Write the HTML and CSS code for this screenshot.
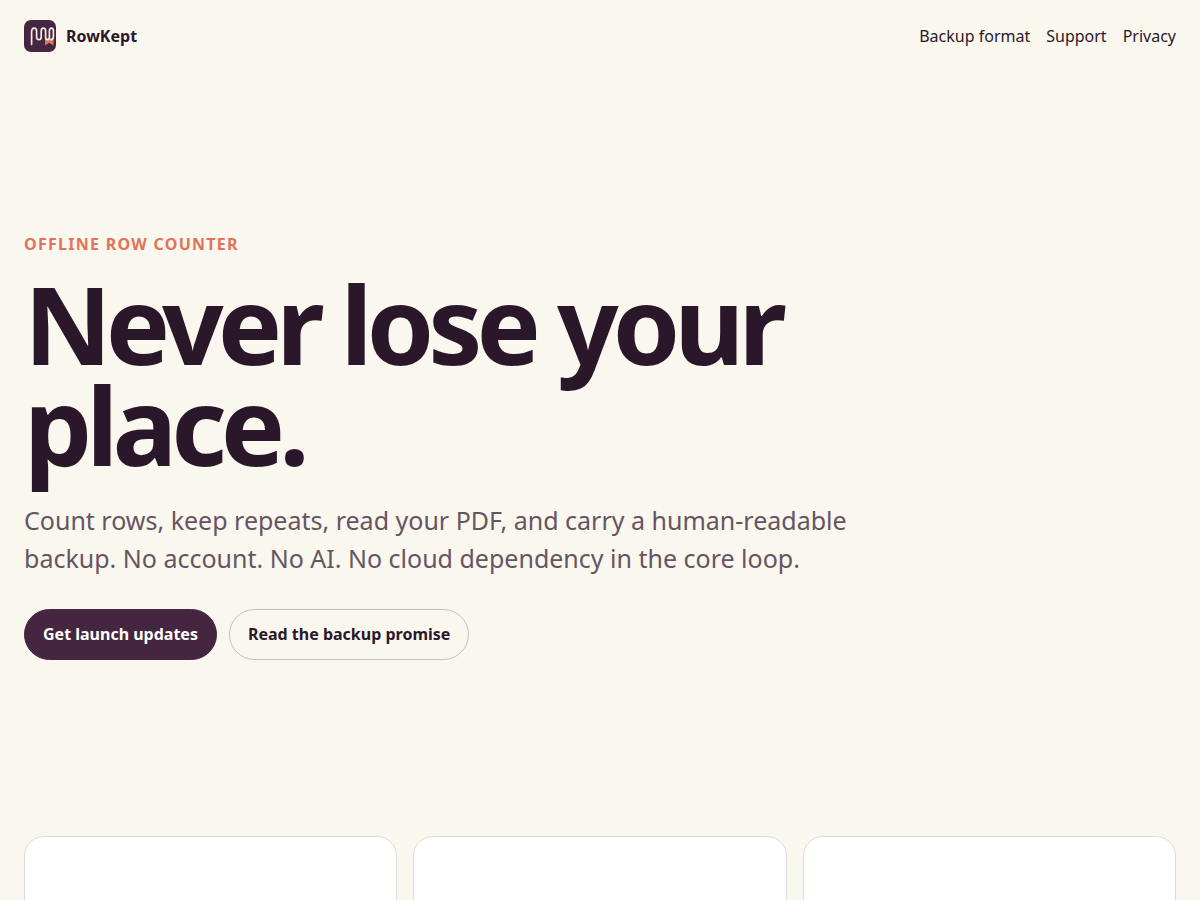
FILE: index.html
```html
<!DOCTYPE html>
<html lang="en">
<head>
<meta charset="utf-8">
<meta name="viewport" content="width=device-width, initial-scale=1">
<title>RowKept</title>
<link rel="stylesheet" href="styles.css">
</head>
<body>
<header class="site-header">
  <a class="brand" href="#top">
    <svg class="brand-mark" viewBox="0 0 32 32" aria-hidden="true">
      <rect width="32" height="32" rx="7" fill="#452641"/>
      <path d="M21 18.5H29.5V25.5L25.2 22.8L21 25.5Z" fill="#e2735a"/>
      <path d="M7.6 24.3V12.5Q7.6 8.2 10.1 8.2Q12.6 8.2 12.6 11.5V17Q12.6 19.7 14.9 19.7Q17.2 19.7 17.2 17V11Q17.2 8.2 19.4 8.2Q21.6 8.2 21.6 11V17Q21.6 19.7 23.5 19.7Q25.4 19.7 25.4 17V11Q25.4 8.2 27.3 8.2Q29.4 8.2 29.4 11V16Q29.4 19.7 27 19.7" fill="none" stroke="#f3e8e4" stroke-width="1.7" stroke-linecap="round"/>
    </svg>
    <span>RowKept</span>
  </a>
  <nav class="site-nav" aria-label="Main">
    <a href="#backup">Backup format</a>
    <a href="#support">Support</a>
    <a href="#privacy">Privacy</a>
  </nav>
</header>
<main id="top">
  <section class="hero">
    <p class="eyebrow">Offline row counter</p>
    <h1 class="hero-title">Never lose your place.</h1>
    <p class="lede">Count rows, keep repeats, read your PDF, and carry a human-readable backup. No account. No AI. No cloud dependency in the core loop.</p>
    <div class="actions">
      <a class="button button-primary" href="#updates">Get launch updates</a>
      <a class="button" href="#backup">Read the backup promise</a>
    </div>
  </section>
  <section class="cards">
    <article class="card"></article>
    <article class="card"></article>
    <article class="card"></article>
  </section>
</main>
</body>
</html>
```
FILE: styles.css
```css
* { box-sizing: border-box; }

body {
  margin: 0;
  background: #faf7ef;
  color: #2b172a;
  font-family: "Noto Sans", sans-serif;
  font-size: 16px;
  line-height: 25px;
}

a {
  color: inherit;
  text-decoration: none;
}

.site-header {
  display: flex;
  align-items: center;
  justify-content: space-between;
  padding: 20px 24px;
}

.brand {
  display: flex;
  align-items: center;
  gap: 10px;
  font-weight: 700;
}

.brand-mark {
  width: 32px;
  height: 32px;
}

.site-nav {
  display: flex;
  gap: 16px;
}

.hero {
  padding: 160px 24px 176px;
}

.eyebrow {
  margin: 0;
  color: #e2735a;
  font-weight: 700;
  letter-spacing: 0.08em;
  text-transform: uppercase;
}

.hero-title {
  max-width: 900px;
  margin: 16px 0 26px;
  font-size: 108px;
  font-weight: 700;
  letter-spacing: -6px;
  line-height: 101px;
}

.lede {
  max-width: 840px;
  margin: 0;
  color: #665463;
  font-size: 25px;
  line-height: 38px;
}

.actions {
  display: flex;
  flex-wrap: wrap;
  gap: 12px;
  margin-top: 32px;
}

.button {
  padding: 12px 18px;
  border: 1px solid #c5c0bc;
  border-radius: 999px;
  font-weight: 700;
}

.button-primary {
  border-color: #452641;
  background: #452641;
  color: #fff;
}

.cards {
  display: grid;
  grid-template-columns: repeat(3, 1fr);
  gap: 16px;
  padding: 0 24px 64px;
}

.card {
  min-height: 240px;
  border: 1px solid #dedbdc;
  border-radius: 20px;
  background: #fff;
}
```
